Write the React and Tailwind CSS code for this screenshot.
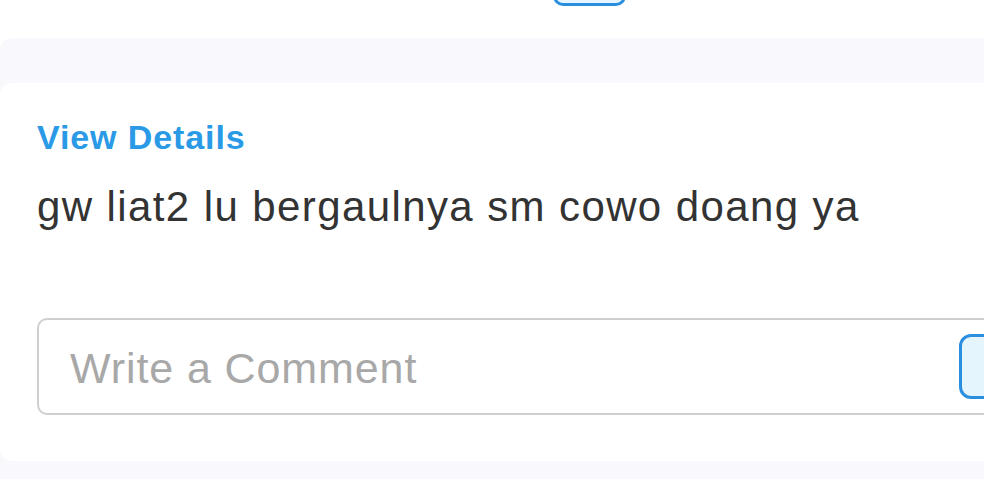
export default function App() {
  return (
    <div
      className="w-[984px] h-[479px] overflow-hidden bg-white flex flex-col"
      style={{ fontFamily: '"Liberation Sans", Arial, sans-serif' }}
    >
      <div className="h-[38px] shrink-0 flex">
        <div className="ml-[553px] w-[73px] h-[46px] -mt-[40px] rounded-[10px] border-[3px] border-[#2a8ee0] bg-[#e5f6fe]" />
      </div>
      <div className="flex-1 bg-[#f9f9fd] rounded-tl-[12px] pt-[45px] w-[1100px]">
        <div className="bg-white rounded-l-[12px] h-[378px] pl-[37px] pt-[37px] flex flex-col">
          <div className="text-[34px] leading-none font-bold text-[#2b9ae6] tracking-[0.9px]">
            View Details
          </div>
          <div className="mt-[32px] text-[42px] leading-none text-[#333333] tracking-[1.4px]">
            gw liat2 lu bergaulnya sm cowo doang ya
          </div>
          <div className="mt-[90px] h-[97px] border-2 border-[#cfcfcf] rounded-[10px] flex items-center pl-[31px]">
            <div className="w-[889px] shrink-0 text-[43px] leading-none text-[#a8a8a8] tracking-[0.9px] pt-[4px]">
              Write a Comment
            </div>
            <div className="w-[100px] h-[65px] shrink-0 rounded-[12px] border-[3px] border-[#2b8fe0] bg-[#e5f5fd]" />
          </div>
        </div>
      </div>
    </div>
  );
}
